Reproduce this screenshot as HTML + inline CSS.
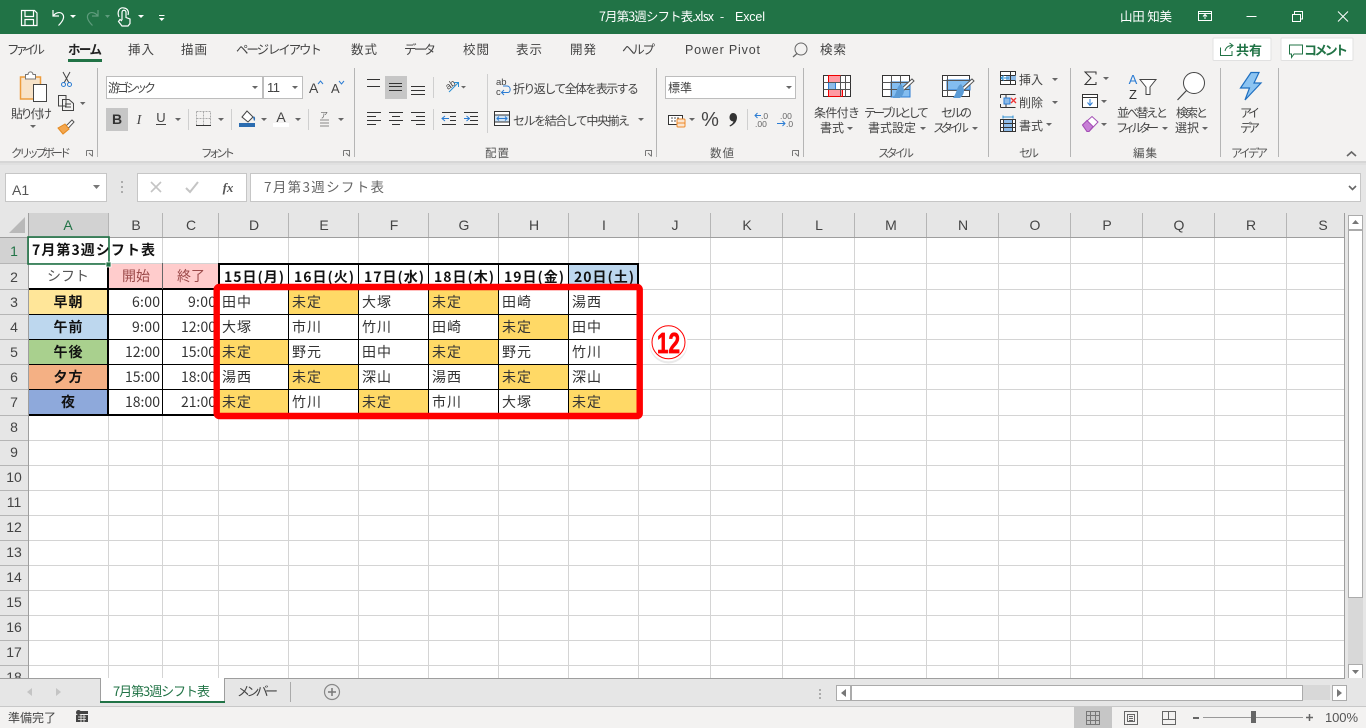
<!DOCTYPE html>
<html lang="ja"><head><meta charset="utf-8"><title>7月第3週シフト表.xlsx - Excel</title>
<style>
html,body{margin:0;padding:0;width:1366px;height:728px;overflow:hidden;background:#e6e6e6}
svg{display:block;font-family:"Liberation Sans","Noto Sans CJK JP",sans-serif}
.j{font-family:"Noto Sans CJK JP","Liberation Sans",sans-serif}
.rb text{font-size:12px;fill:#444}
.tab text{font-size:12.5px;fill:#444}
.gl text{font-size:11.5px;fill:#555}
.hd text{font-size:14px;fill:#444;text-anchor:middle}
.c text{font-size:14px;fill:#333}
.m{text-anchor:middle}
.b{font-weight:700}
.ic{fill:none;stroke:#444;stroke-width:1}
</style></head><body>
<svg width="1366" height="728" viewBox="0 0 1366 728" xmlns="http://www.w3.org/2000/svg" class="j">
<!-- backgrounds -->
<rect width="1366" height="728" fill="#e6e6e6"/>
<rect width="1366" height="34" fill="#217346"/>
<rect y="34" width="1366" height="127" fill="#f3f2f1"/>
<rect y="161" width="1366" height="2" fill="#d6d6d6"/><rect y="163" width="1366" height="2" fill="#e0e0e0"/>

<!-- QAT -->
<g fill="none" stroke="#fff" stroke-width="1.2">
<path d="M21.5 10.5H34.5L37 13V25.5H21.5Z"/><path d="M25 10.5V16.5H33.5V10.5M25 25.5V19.5H33.5V25.5"/>
<path d="M53 10V16H59M53.5 15.5C56 12.5 60 11.5 62.5 14C65 17 63 21 58.5 25.5"/>
<path stroke="#5f9c7d" d="M98 10V16H92M97.5 15.5C95 12.5 91 11.5 88.5 14C86 17 88 21 92.500 25.500"/>
<path d="M122 20V12.500C122 9.500 126 9.500 126 12.500V17.500L130 19V23.500L128 26H122L118.500 21.500L120 19.500L122 21M119 17C116.500 11 120 7 124 8C128 8.500 129 12 128 15"/>
</g>
<g fill="#fff"><path d="M70 15H76L73 18Z"/><path d="M138 15H144L141 18Z"/><path d="M159 15H164.500V16H159ZM159 18H164.500L161.700 21Z"/></g>
<path d="M105 15H110L107.500 18Z" fill="#5f9c7d"/>
<text x="599" y="21" fill="#fff" font-size="12.5" textLength="115">7月第3週シフト表.xlsx</text>
<text x="722" y="21" fill="#fff" font-size="12.5" class="m">-</text>
<text x="735" y="21" fill="#fff" font-size="12.5" textLength="30" font-family="Liberation Sans">Excel</text>
<text x="1120" y="21" fill="#fff" font-size="12.500" textLength="52">山田 知美</text>
<g fill="none" stroke="#fff" stroke-width="1">
<path d="M1198.500 11.500H1211.500V20.500H1198.500ZM1198.500 13.500H1211.500M1205 19V15M1203 16.500L1205 14.500L1207 16.500"/>
<path d="M1246.500 16.500H1256.500"/>
<path d="M1292.500 14.500H1300.500V21.500H1292.500ZM1294.500 14V11.500H1302.500V19H1300.500"/>
<path d="M1338 11.500L1348 21.500M1348 11.500L1338 21.500"/>
</g>

<!-- ribbon tabs -->
<g class="tab">
<text x="7" y="54" textLength="38">ファイル</text>
<text x="68" y="54" textLength="34" class="b" style="fill:#222">ホーム</text>
<text x="128" y="54" textLength="26">挿入</text>
<text x="181" y="54" textLength="26">描画</text>
<text x="236" y="54" textLength="86">ページ レイアウト</text>
<text x="351" y="54" textLength="26">数式</text>
<text x="404" y="54" textLength="32">データ</text>
<text x="463" y="54" textLength="26">校閲</text>
<text x="516" y="54" textLength="26">表示</text>
<text x="570" y="54" textLength="26">開発</text>
<text x="622" y="54" textLength="33">ヘルプ</text>
<text x="685" y="54" textLength="75" font-family="Liberation Sans">Power Pivot</text>
<text x="820" y="54" textLength="26">検索</text>
</g>
<rect x="68" y="59" width="34" height="3" fill="#217346"/>
<path d="M797 53.500L793 57" stroke="#666" fill="none" stroke-width="1.300"/><circle cx="801" cy="49" r="6" fill="none" stroke="#666"/>
<rect x="1213" y="38" width="58" height="22.500" fill="#fff" stroke="#e1e1e1" rx="1"/>
<rect x="1281" y="38" width="72" height="22.500" fill="#fff" stroke="#e1e1e1" rx="1"/>
<path d="M1220.500 47.500V55.500H1232V51M1225 51C1226 47 1229 45.500 1232 45.500M1229.500 43L1233 45.500L1229.500 48.500" fill="none" stroke="#217346"/>
<path d="M1289.500 45H1302.500V54H1294L1291.500 57.500V54H1289.500Z" fill="none" stroke="#217346"/>
<text x="1236" y="55" font-size="13" class="b" fill="#217346" textLength="26">共有</text>
<text x="1304" y="55" font-size="13" class="b" fill="#217346" textLength="44">コメント</text>

<!-- group separators -->
<g fill="#b5b5b5"><rect x="97" y="68" width="1" height="89"/><rect x="354" y="68" width="1" height="89"/><rect x="656" y="68" width="1" height="89"/><rect x="803" y="68" width="1" height="89"/><rect x="988" y="68" width="1" height="89"/><rect x="1070" y="68" width="1" height="89"/><rect x="1220" y="68" width="1" height="89"/><rect x="1278" y="68" width="1" height="89"/></g>
<g fill="#cfcfcf"><rect x="188" y="109" width="1" height="21"/><rect x="231" y="109" width="1" height="21"/><rect x="308" y="109" width="1" height="21"/><rect x="433" y="77" width="1" height="21"/><rect x="433" y="109" width="1" height="21"/><rect x="487" y="74" width="1" height="59"/><rect x="747" y="109" width="1" height="21"/></g>
<g class="gl">
<text x="11" y="157" textLength="60">クリップボード</text>
<text x="201" y="157" textLength="34">フォント</text>
<text x="485" y="157" textLength="24">配置</text>
<text x="710" y="157" textLength="24">数値</text>
<text x="878" y="157" textLength="36">スタイル</text>
<text x="1019" y="157" textLength="20">セル</text>
<text x="1133" y="157" textLength="24">編集</text>
<text x="1231" y="157" textLength="37">アイデア</text>
</g>
<g fill="none" stroke="#777"><path d="M86.500 150.500H92.500V156.500M86.500 150.500V156M89 153L92 156M343.500 150.500H349.500V156.500M343.500 150.500V156M346 153L349 156M645.500 150.500H651.500V156.500M645.500 150.500V156M648 153L651 156M792.500 150.500H798.500V156.500M792.500 150.500V156M795 153L798 156"/>
<path d="M1347 156L1351.500 152L1356 156" stroke="#666" stroke-width="1.600"/></g>

<!-- clipboard -->
<rect x="20.500" y="77" width="20" height="22" fill="#f8e3c8" stroke="#ed9c3c" stroke-width="1.500"/>
<path d="M25.500 77V74.500H28C28.500 71 32.500 71 33 74.500H35.500V79H25.500Z" fill="#fff" stroke="#777"/>
<rect x="33.500" y="84.500" width="13" height="17" fill="#fff" stroke="#444"/>
<g class="rb">
<text x="11" y="118" textLength="41">貼り付け</text>
</g>
<path d="M30 125H36L33 128Z" fill="#666"/>
<path d="M63 72L69 83M70 72L64 83" fill="none" stroke="#444"/><circle cx="63.500" cy="84.500" r="2" fill="none" stroke="#2b7cd3"/><circle cx="69.500" cy="84.500" r="2" fill="none" stroke="#2b7cd3"/>
<path d="M58.500 95.500H66V106H58.500Z M62.500 99.500H69L73.500 103.500V110.500H62.500Z M65 104H71M65 107H71" fill="#f3f2f1" stroke="#444"/>
<path d="M80 102H85.500L82.700 105Z" fill="#666"/>
<path d="M66 126L72 120L74 122L68.500 128Z" fill="#fff" stroke="#555"/><path d="M58 128L65 124L69 129L63 134Z" fill="#f3a64d" stroke="#e58a20"/>

<!-- font group -->
<rect x="106.500" y="76.500" width="156" height="22" fill="#fff" stroke="#bdbdbd"/>
<rect x="263.500" y="76.500" width="39" height="22" fill="#fff" stroke="#bdbdbd"/>
<g class="rb">
<text x="108" y="92" textLength="48">游ゴシック</text>
<text x="267" y="92" font-size="13" textLength="13" font-family="Liberation Sans" style="font-size:13px">11</text>
</g>
<path d="M252 86H258L255 89ZM292 86H298L295 89Z" fill="#666"/>
<text x="309" y="93" font-size="14" fill="#444" font-family="Liberation Sans">A</text>
<text x="331" y="93" font-size="13" fill="#444" font-family="Liberation Sans">A</text>
<path d="M318 84L320.500 81L323 84" stroke="#2b7cd3" fill="none"/><path d="M339 81L341.500 84L344 81" stroke="#2b7cd3" fill="none"/>
<rect x="106" y="108" width="22" height="23" fill="#c6c6c6"/>
<text x="117" y="124" font-size="14" class="b m" fill="#333" font-family="Liberation Sans">B</text>
<text x="139" y="124" font-size="14" class="m" fill="#444" font-style="italic" font-family="Liberation Serif">I</text>
<text x="161" y="122" font-size="13" class="m" fill="#444" font-family="Liberation Sans">U</text>
<rect x="156" y="124" width="10" height="1" fill="#444"/>
<path d="M175 118H181L178 121ZM218 118H224L221 121ZM261 118H267L264 121ZM295 118H301L298 121ZM338 118H344L341 121Z" fill="#666"/>
<path d="M196.500 111.500H210.500V125.500" fill="none" stroke="#aaa" stroke-dasharray="2 1"/><path d="M196.500 111.500V125M196.500 118.500H210.500M203.500 111.500V125" fill="none" stroke="#aaa" stroke-dasharray="2 1"/><rect x="196" y="125" width="15" height="1" fill="#333"/>
<path d="M242 117L247 111L253 117L248 122Z" fill="#fff" stroke="#444"/><path d="M253 117C255 115 256 120 254 121" fill="#2b6cb0"/>
<rect x="239" y="123" width="16" height="4" fill="#2b6cb0"/>
<text x="281" y="122" font-size="14" class="m" fill="#444" font-family="Liberation Sans">A</text>
<rect x="273" y="123" width="16" height="4" fill="#fff"/>
<text x="324" y="118" font-size="8" class="m" fill="#666">ア</text>
<path d="M320 120H329M320 123H329M320 126H329" stroke="#888" fill="none"/>

<!-- alignment -->
<rect x="385" y="76" width="22" height="23" fill="#c6c6c6"/>
<path d="M367 79.500H380M367 86.500H380M389 83.500H402M389 86.500H402M389 90.500H402M411 86.500H425M411 90.500H425M411 94.500H425" stroke="#333" fill="none"/>
<path d="M367 112.500H381M367 116.500H376M367 120.500H381M367 124.500H376M389 112.500H403M392 116.500H400M389 120.500H403M392 124.500H400M411 112.500H425M416 116.500H425M411 120.500H425M416 124.500H425M464 112.500H478M464 124.500H478M470 116.500H478M470 120.500H478M442 112.500H456M442 124.500H456M450 116.500H456M450 120.500H456" stroke="#333" fill="none"/>
<path d="M442 118.500H449M445 116L442 118.500L445 121M464 118.500H469M466.500 116L469.500 118.500L466.500 121" stroke="#2b7cd3" fill="none"/>
<text x="448" y="90" font-size="9" fill="#444" transform="rotate(-35 448 90)" font-family="Liberation Sans">ab</text>
<path d="M449 92L458 83M454 82.500H458.500V87" stroke="#2b8fd3" fill="none"/>
<path d="M461 86H466L463.500 88.500Z" fill="#666"/>
<text x="496" y="85" font-size="9.500" fill="#444" font-family="Liberation Sans">ab</text>
<text x="496" y="95" font-size="9.500" fill="#444" font-family="Liberation Sans">c</text>
<path d="M502 92.500H508C511 92.500 511 86 507 86H503M504 90L501.500 92.500L504 95" stroke="#2b7cd3" fill="none"/>
<rect x="494.500" y="111.500" width="15" height="14" fill="#fff" stroke="#333"/>
<rect x="495" y="115" width="14" height="7" fill="#cfe3f5"/><path d="M494 115H510M494 122H510" stroke="#333" fill="none"/><path d="M497 118.500H507M499 116.500L497 118.500L499 120.500M505 116.500L507 118.500L505 120.500" stroke="#2b7cd3" fill="none"/>
<g class="rb">
<text x="513" y="93" textLength="126">折り返して全体を表示する</text>
<text x="513" y="125" textLength="117">セルを結合して中央揃え</text>
</g>
<path d="M638 118H644L641 121Z" fill="#666"/>

<!-- number -->
<rect x="665.500" y="76.500" width="130" height="22" fill="#fff" stroke="#bdbdbd"/>
<text x="668" y="92" font-size="12" fill="#444" textLength="24">標準</text>
<path d="M786 86H792L789 89Z" fill="#666"/>
<rect x="668.500" y="115.500" width="14" height="9" fill="#fff" stroke="#333"/><path d="M671 118H680M671 121H680" stroke="#555" stroke-dasharray="2 1"/>
<rect x="677" y="119" width="8" height="7" rx="1" fill="#fbe5cf" stroke="#ed8a2c"/><rect x="677" y="123" width="8" height="4" rx="1" fill="#fbe5cf" stroke="#ed8a2c"/>
<path d="M689 118H695L692 121Z" fill="#666"/>
<text x="710" y="126" font-size="20" class="m" fill="#444" font-family="Liberation Sans">%</text>
<path d="M733 113C735.500 113 737 115 737 117.500C737 121.500 734 125 730 126.500L729.500 125.500C731.500 124.500 733 123 733.500 121.500C731 121.500 729.500 119.500 729.500 117.500C729.500 115 731 113 733 113Z" fill="#333"/>
<text x="761" y="119" font-size="8.500" fill="#666" font-family="Liberation Sans">.0</text>
<text x="755" y="127" font-size="8.500" fill="#666" font-family="Liberation Sans">.00</text>
<path d="M761 115.500H755M757.500 113L755 115.500L757.500 118" stroke="#2b7cd3" fill="none"/>
<text x="780" y="119" font-size="8.500" fill="#666" font-family="Liberation Sans">.00</text>
<text x="786" y="127" font-size="8.500" fill="#666" font-family="Liberation Sans">.0</text>
<path d="M777 123.500H785M782.500 121L785 123.500L782.500 126" stroke="#2b7cd3" fill="none"/>

<!-- styles -->
<g fill="none">
<rect x="823.500" y="75.500" width="27" height="21" fill="#fff" stroke="#333"/>
<rect x="828.500" y="75.500" width="12" height="7" fill="#ff9aa2" stroke="#e00"/><rect x="828.500" y="82.500" width="7" height="7" fill="#8dbbe8" stroke="#2b7cd3"/><rect x="828.500" y="89.500" width="14" height="7" fill="#ff9aa2" stroke="#e00"/>
<path d="M823.500 82.500H850.500M823.500 89.500H850.500M840.500 75.500V96.500M845.500 75.500V96.500" stroke="#555"/>
<rect x="882.500" y="75.500" width="27" height="21" fill="#fff" stroke="#333"/>
<rect x="891" y="82" width="19" height="15" fill="#83bdf0" stroke="#2b7cd3"/>
<path d="M882.500 82.500H909.500M882.500 89.500H909.500M891.500 75.500V96.500M900.500 75.500V96.500" stroke="#555"/>
<rect x="942.500" y="75.500" width="27" height="21" fill="#fff" stroke="#333"/>
<rect x="947" y="80" width="23" height="10" fill="#83bdf0" stroke="#2b7cd3"/>
<path d="M942.500 80.500H969.500M942.500 90.500H969.500M947.500 75.500V96.500" stroke="#555"/>
<path d="M903 91L914 81L912 79L901 89Z" fill="#fff" stroke="#555"/>
<path d="M963 91L974 81L972 79L961 89Z" fill="#fff" stroke="#555"/>
<path d="M901 88C896 91 898 95 893 102H900C904 99 905 94 903 91Z" fill="#5b9bd5" transform="translate(0 -4)"/>
<path d="M961 88C956 91 958 95 953 102H960C964 99 965 94 963 91Z" fill="#5b9bd5" transform="translate(0 -4)"/>
</g>
<g class="rb">
<text x="814" y="117" textLength="46">条件付き</text>
<text x="820" y="132" textLength="24">書式</text>
<text x="864" y="117" textLength="65">テーブルとして</text>
<text x="868" y="132" textLength="48">書式設定</text>
<text x="941" y="117" textLength="31">セルの</text>
<text x="933" y="132" textLength="36">スタイル</text>
<text x="1019" y="84" textLength="24">挿入</text>
<text x="1019" y="107" textLength="24">削除</text>
<text x="1019" y="130" textLength="24">書式</text>
<text x="1117" y="117" textLength="51">並べ替えと</text>
<text x="1116" y="132" textLength="43">フィルター</text>
<text x="1176" y="117" textLength="32">検索と</text>
<text x="1175" y="132" textLength="24">選択</text>
<text x="1240" y="117" textLength="20">アイ</text>
<text x="1240" y="132" textLength="20">デア</text>
</g>
<path d="M847 127H853L850 130ZM920 127H926L923 130ZM972 127H978L975 130ZM1052 78H1058L1055 81ZM1052 101H1058L1055 104ZM1046 123H1052L1049 126ZM1103 77H1109L1106 80ZM1101 100H1107L1104 103ZM1101 123H1107L1104 126ZM1162 127H1168L1165 130ZM1202 127H1208L1205 130Z" fill="#666"/>

<!-- cells -->
<g fill="none">
<rect x="1000.500" y="71.500" width="15" height="13" fill="#fff" stroke="#333"/><rect x="1006" y="75" width="10" height="6" fill="#8dbbe8"/><path d="M1000.500 75.500H1015.500M1000.500 80.500H1015.500M1010.500 71.500V84.500" stroke="#333"/><path d="M1009 78H1001M1004 75.500L1001 78L1004 80.500" stroke="#2b8fd3"/>
<path d="M1000.500 94.500H1015.500M1000.500 107.500H1015.500M1000.500 94.500V98M1000.500 104V107.500M1006 94.500V98M1006 104V107.500" stroke="#333"/><rect x="1004" y="98" width="6" height="6" fill="#8dbbe8" stroke="#2b7cd3"/><path d="M1011 98L1016 103M1016 98L1011 103" stroke="#e33" stroke-width="1.300"/>
<rect x="1000.500" y="119.500" width="15" height="12" fill="#fff" stroke="#333"/><rect x="1003" y="120" width="10" height="11" fill="#8dbbe8"/><path d="M1000.500 123.500H1015.500M1000.500 127.500H1015.500M1003.500 119.500V131.500M1012.500 119.500V131.500" stroke="#333"/><path d="M1003 117H1013M1003 115.500V118.500M1013 115.500V118.500" stroke="#2b8fd3"/>
<!-- editing -->
<path d="M1096 74.500V72H1085L1091 78L1085 84.500H1096V82" stroke="#333"/>
<rect x="1082.500" y="94.500" width="15" height="13" fill="#fff" stroke="#333"/><path d="M1082.500 97.500H1097.500" stroke="#333"/><path d="M1090 99V105M1087.500 102.500L1090 105.500L1092.500 102.500" stroke="#2b7cd3"/>
<path d="M1082.500 125L1092 116.500L1098 122L1089 131.500H1087Z" fill="#fff" stroke="#a34fb5"/><path d="M1082.500 125L1087 120.500L1093 126.500L1089 131.500H1087Z" fill="#c77fd6" stroke="#a34fb5"/>
<path d="M1140 79.500H1156L1150 87V94.500H1146V87Z" fill="#fff" stroke="#444"/>
<circle cx="1194" cy="83" r="10.500" fill="#fff" stroke="#444"/><path d="M1186.500 90.500L1177.500 100" stroke="#444" stroke-width="1.200"/>
<path d="M1251 72.500H1259L1254 83H1261L1245 100L1249.500 88H1240.500Z" fill="#8cc4f2" stroke="#1f6fc0" stroke-width="1.200"/>
</g>
<text x="1133" y="84" font-size="13" class="m" fill="#2b7cd3" font-family="Liberation Sans">A</text>
<text x="1133" y="99" font-size="13" class="m" fill="#333" font-family="Liberation Sans">Z</text>

<!-- formula bar -->
<rect x="5.500" y="173.500" width="101" height="28" fill="#fff" stroke="#c6c6c6"/>
<rect x="137.500" y="173.500" width="109" height="28" fill="#fff" stroke="#c6c6c6"/>
<rect x="250.500" y="173.500" width="1110" height="28" fill="#fff" stroke="#c6c6c6"/>
<text x="12" y="195" font-size="14" fill="#555" font-family="Liberation Sans">A1</text>
<path d="M93 185H100L96.500 189Z" fill="#777"/>
<path d="M122 181v2M122 186v2M122 191v2" stroke="#999" stroke-width="1.500" fill="none"/>
<path d="M151 182L161 192M161 182L151 192" stroke="#c4c4c4" stroke-width="1.600" fill="none"/>
<path d="M186 188L190 192L198 182" stroke="#c4c4c4" stroke-width="2" fill="none"/>
<text x="228" y="192" font-size="13" class="m b" fill="#555" font-style="italic" font-family="Liberation Serif">fx</text>
<text x="264" y="192" font-size="13.500" fill="#666" textLength="120">7月第3週シフト表</text>
<path d="M1349 186L1352.500 189.500L1356 186" stroke="#666" stroke-width="1.600" fill="none"/>

<!-- sheet -->
<rect x="29" y="238" width="1315" height="440" fill="#fff"/>
<rect y="213" width="1345" height="25" fill="#e6e6e6"/>
<rect y="213" width="29" height="465" fill="#e6e6e6"/>
<rect x="29" y="213" width="79" height="24" fill="#d2d2d2"/>
<rect y="238" width="28" height="25" fill="#d2d2d2"/>
<path d="M25 217V233H9Z" fill="#b9b9b9"/>
<path fill="none" stroke="#d4d4d4" d="M108.500 238V678M162.500 238V678M218.500 238V678M288.500 238V678M358.500 238V678M428.500 238V678M498.500 238V678M568.500 238V678M638.500 238V678M710.500 238V678M782.500 238V678M854.500 238V678M926.500 238V678M998.500 238V678M1070.500 238V678M1142.500 238V678M1214.500 238V678M1286.500 238V678M29 263.500H1344M29 289.500H1344M29 314.500H1344M29 339.500H1344M29 364.500H1344M29 389.500H1344M29 415.500H1344M29 440.500H1344M29 465.500H1344M29 490.500H1344M29 515.500H1344M29 540.500H1344M29 565.500H1344M29 590.500H1344M29 615.500H1344M29 640.500H1344M29 665.500H1344"/>
<path fill="none" stroke="#b5b5b5" d="M108.500 213V237M162.500 213V237M218.500 213V237M288.500 213V237M358.500 213V237M428.500 213V237M498.500 213V237M568.500 213V237M638.500 213V237M710.500 213V237M782.500 213V237M854.500 213V237M926.500 213V237M998.500 213V237M1070.500 213V237M1142.500 213V237M1214.500 213V237M1286.500 213V237M0 263.500H28M0 289.500H28M0 314.500H28M0 339.500H28M0 364.500H28M0 389.500H28M0 415.500H28M0 440.500H28M0 465.500H28M0 490.500H28M0 515.500H28M0 540.500H28M0 565.500H28M0 590.500H28M0 615.500H28M0 640.500H28M0 665.500H28"/>
<rect y="237" width="1345" height="1" fill="#9e9e9e"/><rect x="28" y="213" width="1" height="465" fill="#9e9e9e"/>
<rect x="1344" y="213" width="1" height="465" fill="#9e9e9e"/>
<g class="hd" style="font-family:'Liberation Sans'">
<text x="68" y="230" style="fill:#217346">A</text><text x="136" y="230">B</text><text x="191" y="230">C</text><text x="254" y="230">D</text><text x="324" y="230">E</text><text x="394" y="230">F</text><text x="464" y="230">G</text><text x="534" y="230">H</text><text x="604" y="230">I</text><text x="675" y="230">J</text><text x="747" y="230">K</text><text x="819" y="230">L</text><text x="891" y="230">M</text><text x="963" y="230">N</text><text x="1035" y="230">O</text><text x="1107" y="230">P</text><text x="1179" y="230">Q</text><text x="1251" y="230">R</text><text x="1323" y="230">S</text>
<text x="14" y="256" style="fill:#217346">1</text><text x="14" y="282">2</text><text x="14" y="307">3</text><text x="14" y="332">4</text><text x="14" y="357">5</text><text x="14" y="382">6</text><text x="14" y="407">7</text><text x="14" y="432">8</text><text x="14" y="457">9</text><text x="14" y="482">10</text><text x="14" y="507">11</text><text x="14" y="532">12</text><text x="14" y="557">13</text><text x="14" y="582">14</text><text x="14" y="607">15</text><text x="14" y="632">16</text><text x="14" y="657">17</text><text x="14" y="682">18</text>
</g>
<!-- fills -->
<rect x="109" y="264" width="53" height="25" fill="#ffcccc"/><rect x="163" y="264" width="55" height="25" fill="#ffcccc"/>
<rect x="569" y="264" width="69" height="25" fill="#bdd7ee"/>
<rect x="29" y="290" width="78" height="24" fill="#ffe699"/><rect x="29" y="315" width="78" height="24" fill="#bdd7ee"/><rect x="29" y="340" width="78" height="24" fill="#a9d08e"/><rect x="29" y="365" width="78" height="24" fill="#f4b084"/><rect x="29" y="390" width="78" height="24" fill="#8ea9db"/>
<g fill="#ffd966">
<rect x="289" y="290" width="69" height="24"/><rect x="429" y="290" width="69" height="24"/>
<rect x="499" y="315" width="69" height="24"/>
<rect x="219" y="340" width="69" height="24"/><rect x="429" y="340" width="69" height="24"/>
<rect x="289" y="365" width="69" height="24"/><rect x="499" y="365" width="69" height="24"/>
<rect x="219" y="390" width="69" height="24"/><rect x="359" y="390" width="69" height="24"/><rect x="569" y="390" width="69" height="24"/>
</g>
<!-- borders -->
<g fill="#000">
<rect x="29" y="288" width="190" height="2"/>
<rect x="107" y="263" width="2" height="26"/><rect x="162" y="263" width="1" height="26" fill="#666"/>
<rect x="218" y="263" width="421" height="2"/>
<rect x="218" y="263" width="2" height="26"/><rect x="288" y="263" width="1" height="26"/><rect x="358" y="263" width="1" height="26"/><rect x="428" y="263" width="1" height="26"/><rect x="498" y="263" width="1" height="26"/><rect x="568" y="263" width="1" height="26"/><rect x="637" y="263" width="2" height="26"/>
<rect x="29" y="289" width="609" height="1"/>
<rect x="29" y="314" width="609" height="1"/><rect x="29" y="339" width="609" height="1"/><rect x="29" y="364" width="609" height="1"/><rect x="29" y="389" width="609" height="1"/><rect x="29" y="414" width="609" height="2"/>
<rect x="107" y="289" width="2" height="127"/><rect x="162" y="289" width="1" height="127"/><rect x="218" y="289" width="1" height="127"/><rect x="288" y="289" width="1" height="127"/><rect x="358" y="289" width="1" height="127"/><rect x="428" y="289" width="1" height="127"/><rect x="498" y="289" width="1" height="127"/><rect x="568" y="289" width="1" height="127"/><rect x="638" y="289" width="1" height="127"/>
</g>
<!-- cell text -->
<g class="c">
<text x="32" y="255" class="b" textLength="123" style="fill:#111">7月第3週シフト表</text>
<text x="68" y="281" class="m" textLength="42" style="fill:#555">シフト</text>
<text x="136" y="281" class="m" textLength="28" style="fill:#9c4a4a">開始</text>
<text x="191" y="281" class="m" textLength="28" style="fill:#9c4a4a">終了</text>
<g style="fill:#111"><text x="224" y="282" class="b" textLength="60" style="fill:#111">15日(月)</text><text x="294" y="282" class="b" textLength="60" style="fill:#111">16日(火)</text><text x="364" y="282" class="b" textLength="60" style="fill:#111">17日(水)</text><text x="434" y="282" class="b" textLength="60" style="fill:#111">18日(木)</text><text x="504" y="282" class="b" textLength="60" style="fill:#111">19日(金)</text><text x="574" y="282" class="b" textLength="60" style="fill:#111">20日(土)</text></g>
<text x="68" y="307" class="b m" textLength="29" style="fill:#111">早朝</text><text x="68" y="332" class="b m" textLength="29" style="fill:#111">午前</text><text x="68" y="357" class="b m" textLength="29" style="fill:#111">午後</text><text x="68" y="382" class="b m" textLength="29" style="fill:#111">夕方</text><text x="68" y="407" class="b m" style="fill:#111">夜</text>
<text x="132" y="307" textLength="28">6:00</text><text x="132" y="332" textLength="28">9:00</text><text x="125" y="357" textLength="35">12:00</text><text x="125" y="382" textLength="35">15:00</text><text x="125" y="407" textLength="35">18:00</text>
<text x="188" y="307" textLength="28">9:00</text><text x="181" y="332" textLength="35">12:00</text><text x="181" y="357" textLength="35">15:00</text><text x="181" y="382" textLength="35">18:00</text><text x="181" y="407" textLength="35">21:00</text>
<text x="222" y="307" textLength="29">田中</text><text x="292" y="307" textLength="29">未定</text><text x="362" y="307" textLength="29">大塚</text><text x="432" y="307" textLength="29">未定</text><text x="502" y="307" textLength="29">田崎</text><text x="572" y="307" textLength="29">湯西</text>
<text x="222" y="332" textLength="29">大塚</text><text x="292" y="332" textLength="29">市川</text><text x="362" y="332" textLength="29">竹川</text><text x="432" y="332" textLength="29">田崎</text><text x="502" y="332" textLength="29">未定</text><text x="572" y="332" textLength="29">田中</text>
<text x="222" y="357" textLength="29">未定</text><text x="292" y="357" textLength="29">野元</text><text x="362" y="357" textLength="29">田中</text><text x="432" y="357" textLength="29">未定</text><text x="502" y="357" textLength="29">野元</text><text x="572" y="357" textLength="29">竹川</text>
<text x="222" y="382" textLength="29">湯西</text><text x="292" y="382" textLength="29">未定</text><text x="362" y="382" textLength="29">深山</text><text x="432" y="382" textLength="29">湯西</text><text x="502" y="382" textLength="29">未定</text><text x="572" y="382" textLength="29">深山</text>
<text x="222" y="407" textLength="29">未定</text><text x="292" y="407" textLength="29">竹川</text><text x="362" y="407" textLength="29">未定</text><text x="432" y="407" textLength="29">市川</text><text x="502" y="407" textLength="29">大塚</text><text x="572" y="407" textLength="29">未定</text>
</g>
<!-- selection -->
<rect x="28" y="237" width="81" height="27" fill="none" stroke="#217346" stroke-width="1.600"/>
<rect x="106" y="262" width="5" height="5" fill="#217346" stroke="#fff" stroke-width=".8"/>
<!-- red box -->
<rect x="216.700" y="287" width="423" height="129" rx="2.500" fill="none" stroke="#ff0000" stroke-width="6.400"/>
<circle cx="668.500" cy="344.500" r="19" fill="#dcdcdc" opacity=".6"/>
<circle cx="668.500" cy="342.300" r="19" fill="#fff"/>
<circle cx="668.500" cy="342.300" r="16.500" fill="none" stroke="#ff0000" stroke-width="1"/>
<text x="668.500" y="353" font-size="29" class="b m" fill="#ff0000" stroke="#ff0000" stroke-width=".7" font-family="Liberation Sans" textLength="23" lengthAdjust="spacingAndGlyphs">12</text>

<!-- v scrollbar -->
<rect x="1345" y="213" width="21" height="465" fill="#e6e6e6"/>
<rect x="1348" y="598" width="15" height="67" fill="#d8d8d8"/>
<rect x="1348.500" y="215.500" width="14" height="14" fill="#fff" stroke="#ababab"/>
<rect x="1348.500" y="230.500" width="14" height="367" fill="#fff" stroke="#ababab"/>
<rect x="1348.500" y="664.500" width="14" height="14" fill="#fff" stroke="#ababab"/>
<path d="M1352 224H1359L1355.500 220ZM1352 670H1359L1355.500 674Z" fill="#777"/>

<!-- tabs bar -->
<rect y="678" width="1366" height="28" fill="#e6e6e6"/>
<rect y="678" width="1345" height="1" fill="#9e9e9e"/>
<rect x="100.500" y="678" width="124" height="25" fill="#fff"/>
<path d="M100.500 678V702M224.500 678V702" stroke="#9e9e9e" fill="none"/>
<rect x="100" y="701" width="125" height="2" fill="#217346"/>
<text x="113" y="696" font-size="13" fill="#217346" textLength="97">7月第3週シフト表</text>
<text x="237" y="696" font-size="13" fill="#444" textLength="41">メンバー</text>
<rect x="290" y="682" width="1" height="20" fill="#aaa"/>
<circle cx="332" cy="692" r="7.500" fill="none" stroke="#888" stroke-width="1.200"/><path d="M328 692H336M332 688V696" stroke="#777" stroke-width="1.500" fill="none"/>
<path d="M32 688L27 692L32 696ZM56 688L61 692L56 696Z" fill="#c4c4c4"/>
<path d="M820 689v2M820 693v2M820 697v2" stroke="#999" stroke-width="1.500" fill="none"/>
<rect x="1303" y="685" width="27" height="15" fill="#d8d8d8"/>
<rect x="836.500" y="685.500" width="14" height="15" fill="#fff" stroke="#ababab"/>
<rect x="851.500" y="685.500" width="451" height="15" fill="#fff" stroke="#ababab"/>
<rect x="1332.500" y="685.500" width="14" height="15" fill="#fff" stroke="#ababab"/>
<path d="M846 689V697L841 693ZM1337 689V697L1342 693Z" fill="#777"/>

<!-- status bar -->
<rect y="706" width="1366" height="1" fill="#c8c8c8"/>
<rect y="707" width="1366" height="21" fill="#f3f2f1"/>
<text x="8" y="722" font-size="12" fill="#444" textLength="48">準備完了</text>
<circle cx="78.500" cy="712.500" r="2.500" fill="#444"/>
<path d="M76 715H88V722H76Z" fill="#444"/><path d="M78 717H86M78 719.500H86M81 715V722M84 715V722" stroke="#f3f2f1" fill="none" stroke-width=".8"/><path d="M80 711H88V714H80Z" fill="#444"/>
<rect x="1074" y="707" width="38" height="21" fill="#c6c6c6"/>
<path d="M1086.500 711.500H1099.500V724.500H1086.500ZM1086.500 715.500H1099.500M1086.500 720.500H1099.500M1090.500 711.500V724.500M1095.500 711.500V724.500" stroke="#777" fill="none"/>
<path d="M1124.500 711.500H1137.500V724.500H1124.500ZM1127.500 714.500H1134.500V721.500H1127.500ZM1129 716.500H1133M1129 718.500H1133M1129 720.500H1133" stroke="#666" fill="none"/>
<path d="M1162.500 711.500H1175.500V724.500H1162.500ZM1162.500 719.500H1175.500M1168.500 711.500V719.500" stroke="#666" fill="none"/>
<rect x="1193" y="717" width="6" height="2" fill="#666"/>
<rect x="1203" y="717" width="100" height="1" fill="#999"/>
<rect x="1251" y="711" width="5" height="12" fill="#666"/>
<path d="M1306 717.500H1313M1309.500 714V721" stroke="#666" stroke-width="1.500" fill="none"/>
<text x="1325" y="722" font-size="13" fill="#555" textLength="33" font-family="Liberation Sans">100%</text>
</svg>
</body></html>
